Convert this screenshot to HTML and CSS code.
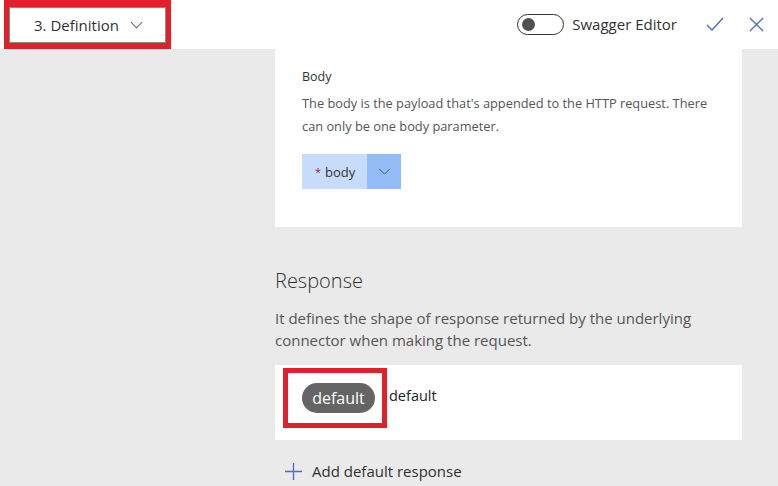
FILE: index.html
```html
<!DOCTYPE html>
<html lang="en">
<head>
  <meta charset="UTF-8">
  <title>Custom connector - Definition</title>
  <link rel="stylesheet" href="styles.css">
</head>
<body>
  <header class="topbar">
    <div class="step-mark">
      <button class="step-btn">3. Definition
        <svg class="chev" viewBox="0 0 14 8"><path d="M1 1l6 6 6-6" fill="none" stroke="#666" stroke-width="1.1"/></svg>
      </button>
    </div>
    <div class="actions">
      <span class="toggle"><span class="knob"></span></span>
      <span class="toggle-label">Swagger Editor</span>
      <svg class="icon" viewBox="0 0 18 14"><path d="M1 8l5 5L17 1" fill="none" stroke="#4a6cc3" stroke-width="1.4"/></svg>
      <svg class="icon close" viewBox="0 0 16 16"><path d="M1 1l14 14M15 1L1 15" fill="none" stroke="#4a6cc3" stroke-width="1.4"/></svg>
    </div>
  </header>

  <main class="content">
    <section class="card">
      <div class="label">Body</div>
      <p class="hint">The body is the payload that's appended to the HTTP request. There can only be one body parameter.</p>
      <div class="param">
        <span class="param-name"><span class="req">*</span> body</span>
        <span class="param-caret">
          <svg viewBox="0 0 14 8"><path d="M1 1l6 6 6-6" fill="none" stroke="#444" stroke-width="1"/></svg>
        </span>
      </div>
    </section>

    <h2 class="section-title">Response</h2>
    <p class="section-desc">It defines the shape of response returned by the underlying connector when making the request.</p>

    <div class="response-row">
      <div class="pill-mark"><span class="pill">default</span></div>
      <span class="response-name">default</span>
    </div>

    <div class="add-link">
      <svg class="plus" viewBox="0 0 18 18"><path d="M9 0v18M0 9h18" fill="none" stroke="#4a6cc3" stroke-width="1.4"/></svg>
      Add default response
    </div>
  </main>
</body>
</html>
```

FILE: styles.css
```css
body {
  margin: 0;
  background: #eaeaea;
  font-family: "Open Sans", "Noto Sans", sans-serif;
  color: #323130;
  height: 486px;
  overflow: hidden;
}

.topbar {
  height: 49px;
  background: #fff;
  display: flex;
  justify-content: space-between;
  align-items: flex-start;
}
.step-mark {
  margin-left: 4px;
  border: solid #e2202c;
  border-width: 7px 5px 6px 5px;
  display: flex;
}
.step-btn {
  width: 157px;
  height: 36px;
  border: 1px solid #8a8886;
  background: #fff;
  font-family: inherit;
  font-size: 15px;
  color: #323130;
  display: flex;
  align-items: center;
  justify-content: center;
  gap: 11px;
  padding: 0 0 0 2px;
}
.step-btn .chev { width: 13px; height: 8px; }

.actions {
  display: flex;
  align-items: center;
  height: 49px;
  padding-right: 14px;
}
.toggle {
  width: 41px;
  height: 19px;
  border: 1px solid #333;
  border-radius: 11px;
  display: flex;
  align-items: center;
  padding-left: 4px;
  box-sizing: content-box;
  margin-top: -1px;
}
.knob {
  width: 13px;
  height: 13px;
  border-radius: 50%;
  background: #505050;
}
.toggle-label {
  font-size: 15px;
  margin-left: 8px;
  margin-right: 29px;
  margin-top: -2px;
}
.icon { width: 18px; height: 14px; margin-top: -1px; }
.icon.close { width: 15px; height: 15px; margin-left: 25px; }

.content {
  width: 467px;
  margin-left: 275px;
}
.card {
  background: #fff;
  padding: 19px 27px 38px;
}
.label {
  font-size: 12.5px;
  color: #323130;
}
.hint {
  font-size: 12.8px;
  line-height: 23px;
  color: #555;
  margin: 7px 0 16px;
}
.param {
  display: flex;
  width: 99px;
  height: 35px;
}
.param-name {
  flex: 1;
  background: #c7dcfb;
  font-size: 13px;
  display: flex;
  align-items: center;
  padding-left: 13px;
  color: #333;
}
.req { color: #a4262c; margin-right: 4px; font-size: 11px; }
.param-caret {
  width: 34px;
  background: #94bdf8;
  display: flex;
  align-items: center;
  justify-content: center;
}
.param-caret svg { width: 13px; height: 7px; }

.section-title {
  font-weight: 300;
  font-size: 20px;
  margin: 40px 0 0;
  color: #323130;
}
.section-desc {
  font-size: 15px;
  line-height: 22px;
  color: #555;
  margin: 13px 0 14px;
}
.response-row {
  background: #fff;
  height: 75px;
  display: flex;
  align-items: flex-start;
  padding-left: 8px;
}
.pill-mark {
  box-sizing: border-box;
  margin-top: 3px;
  width: 104px;
  height: 60px;
  border: 5px solid #e2202c;
  display: flex;
  align-items: center;
  padding-left: 14px;
}
.pill {
  background: #646464;
  color: #fff;
  font-size: 16px;
  border-radius: 15px;
  height: 30px;
  width: 73px;
  flex: none;
  display: flex;
  align-items: center;
  justify-content: center;
}
.response-name {
  font-size: 14.5px;
  margin-top: 21px;
  margin-left: 2px;
  color: #222;
}
.add-link {
  display: flex;
  align-items: center;
  gap: 10px;
  margin-top: 21px;
  padding-left: 10px;
  font-size: 15px;
  color: #323130;
}
.plus { width: 17px; height: 17px; }
```
